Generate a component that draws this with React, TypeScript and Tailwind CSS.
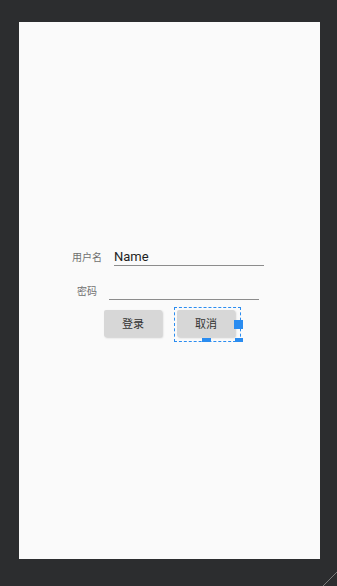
import React from "react";

const cjk = { fontFamily: '"Noto Sans CJK SC", "Noto Sans", sans-serif' };

function Field({ label, value, labelW, gap }: { label: string; value?: string; labelW: string; gap: string }) {
  return (
    <div className="flex items-center h-[18px]">
      <span className={`${labelW} text-[10px] leading-[14px] text-[#6f6f6f] text-right`} style={cjk}>
        {label}
      </span>
      <div
        className={`${gap} w-[150px] h-[18px] border-b border-[#8c8c8c] text-[13px] leading-[15px] pt-[1px] text-[#1e1e1e]`}
        style={{ fontFamily: "Roboto, sans-serif" }}
      >
        {value}
      </div>
    </div>
  );
}

export default function App() {
  return (
    <div className="relative w-[337px] h-[586px] bg-[#2c2d2f] pt-[22px] pl-[19px]">
      <div className="w-[301px] h-[537px] bg-[#fafafa] pt-[226px]">
        <div className="flex flex-col">
          <div className="pl-[50px]">
            <Field label="用户名" value="Name" labelW="w-[33px]" gap="ml-[12px]" />
          </div>
          <div className="pl-[50px] mt-[16px]">
            <Field label="密码" labelW="w-[28px]" gap="ml-[12px]" />
          </div>
          <div className="flex mt-[10px] pl-[85px] gap-[15px]">
            <button
              className="w-[58px] h-[27px] bg-[#d7d7d7] rounded-[2px] shadow-[1px_1px_2px_rgba(0,0,0,0.18)] text-[11px] text-[#333]"
              style={cjk}
            >
              登录
            </button>
            <div className="relative">
              <button
                className="w-[58px] h-[27px] bg-[#d7d7d7] rounded-[2px] shadow-[1px_1px_2px_rgba(0,0,0,0.18)] text-[11px] text-[#333]"
                style={cjk}
              >
                取消
              </button>
              <span className="absolute left-[-3px] top-[-3px] w-[67px] h-[35px] border border-dashed border-[#2a8cf0]" />
              <span className="absolute left-[57px] top-[10px] w-[9px] h-[9px] bg-[#2a8cf0]" />
              <span className="absolute left-[25px] top-[28px] w-[9px] h-[4px] bg-[#2a8cf0]" />
              <span className="absolute left-[58px] top-[28px] w-[8px] h-[4px] bg-[#2a8cf0]" />
            </div>
          </div>
        </div>
      </div>
      <svg className="absolute right-0 bottom-0" width="16" height="16" viewBox="0 0 16 16">
        <line x1="2" y1="16" x2="16" y2="2" stroke="#7a7a7a" strokeWidth="1" />
      </svg>
    </div>
  );
}
